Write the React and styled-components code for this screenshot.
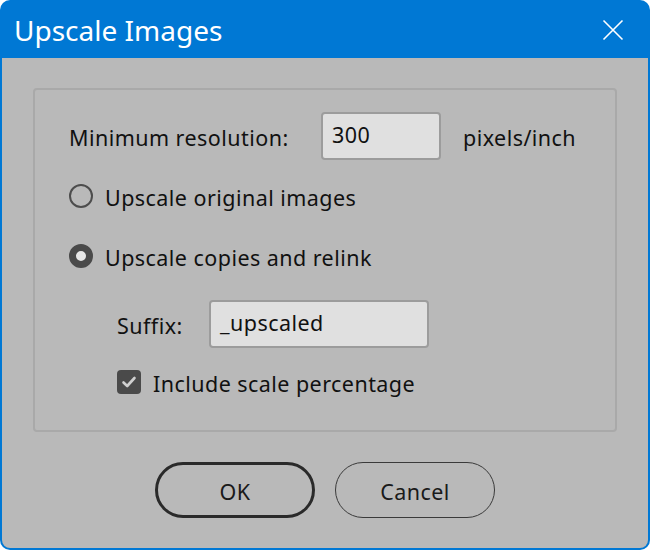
import React from "react";
import styled, { createGlobalStyle } from "styled-components";

const Global = createGlobalStyle`
  html, body { margin: 0; padding: 0; background: #ffffff; }
  body { font-family: "Noto Sans", "Open Sans", sans-serif; }
  * { box-sizing: border-box; }
`;

const Window = styled.div`
  width: 650px;
  height: 550px;
  background: #0078d4;
  border-radius: 10px 10px 10px 10px;
  padding: 0 2px 2px 2px;
  display: flex;
  flex-direction: column;
  overflow: hidden;
`;

const TitleBar = styled.div`
  height: 58px;
  display: flex;
  align-items: center;
  justify-content: space-between;
  padding: 2px 14px 0 12px;
  color: #ffffff;
`;

const Title = styled.div`
  font-size: 28px;
  font-weight: 400;
`;

const CloseButton = styled.div`
  width: 24px;
  height: 24px;
  display: flex;
  align-items: center;
  justify-content: center;
  margin-right: 9px;
`;

const Body = styled.div`
  flex: 1;
  background: #b9b9b9;
  border-radius: 0 0 8px 8px;
  padding: 30px 31px 0 31px;
  display: flex;
  flex-direction: column;
`;

const Group = styled.div`
  height: 344px;
  border: 2px solid #a9a9a9;
  border-radius: 4px;
  padding: 22px 0 0 34px;
  display: flex;
  flex-direction: column;
  color: #111111;
  font-size: 21.5px;
  letter-spacing: 0.45px;
`;

const Row = styled.div`
  display: flex;
  align-items: center;
  height: ${(p) => p.h || 48}px;
  margin-top: ${(p) => p.mt || 0}px;
  padding-left: ${(p) => p.indent || 0}px;
`;

const Label = styled.span`
  width: ${(p) => (p.w ? p.w + "px" : "auto")};
  flex-shrink: 0;
  padding-top: 2px;
`;

const Text = styled.span`
  padding-top: 2px;
`;

const TextBox = styled.div`
  width: ${(p) => p.w}px;
  height: 48px;
  background: #e0e0e0;
  border: 2px solid #9c9c9c;
  border-radius: 4px;
  display: flex;
  align-items: center;
  padding: 0 0 4px 9px;
  color: #111;
`;

const Unit = styled.span`
  margin-left: 22px;
  padding-top: 2px;
`;

const Radio = styled.span`
  width: 24px;
  height: 24px;
  border-radius: 50%;
  border: ${(p) => (p.checked ? "7.5px solid #4a4a4a" : "2px solid #4d4d4d")};
  background: ${(p) => (p.checked ? "#e6e6e6" : "transparent")};
  margin-right: 12px;
  flex-shrink: 0;
`;

const Check = styled.span`
  width: 24px;
  height: 24px;
  border-radius: 4px;
  background: #4a4a4a;
  margin-right: 12px;
  display: flex;
  align-items: center;
  justify-content: center;
  flex-shrink: 0;
`;

const Buttons = styled.div`
  display: flex;
  justify-content: center;
  gap: 20px;
  margin-top: 30px;
`;

const Button = styled.div`
  width: 160px;
  height: 56px;
  border-radius: 28px;
  border: ${(p) => (p.primary ? "3px solid #2a2a2a" : "1.5px solid #3a3a3a")};
  display: flex;
  align-items: center;
  justify-content: center;
  font-size: 21.5px;
  letter-spacing: 0.45px;
  color: #1a1a1a;
  padding-top: 2px;
`;

export default function App() {
  return (
    <>
      <Global />
      <Window>
        <TitleBar>
          <Title>Upscale Images</Title>
          <CloseButton>
            <svg width="22" height="22" viewBox="0 0 22 22">
              <path d="M1.5 1.5 L20.5 20.5 M20.5 1.5 L1.5 20.5" stroke="#fff" strokeWidth="1.6" fill="none" />
            </svg>
          </CloseButton>
        </TitleBar>
        <Body>
          <Group>
            <Row>
              <Label w={252}>Minimum resolution:</Label>
              <TextBox w={120}>300</TextBox>
              <Unit>pixels/inch</Unit>
            </Row>
            <Row mt={12}>
              <Radio />
              <Text>Upscale original images</Text>
            </Row>
            <Row mt={12}>
              <Radio checked />
              <Text>Upscale copies and relink</Text>
            </Row>
            <Row mt={20} indent={48}>
              <Label w={92}>Suffix:</Label>
              <TextBox w={220}>_upscaled</TextBox>
            </Row>
            <Row mt={10} indent={48}>
              <Check>
                <svg width="18" height="18" viewBox="0 0 18 18">
                  <path d="M3.5 9.5 L7.2 13 L14.5 5" stroke="#cfcfcf" strokeWidth="2.6" fill="none" strokeLinecap="round" strokeLinejoin="round" />
                </svg>
              </Check>
              <Text>Include scale percentage</Text>
            </Row>
          </Group>
          <Buttons>
            <Button primary>OK</Button>
            <Button>Cancel</Button>
          </Buttons>
        </Body>
      </Window>
    </>
  );
}
